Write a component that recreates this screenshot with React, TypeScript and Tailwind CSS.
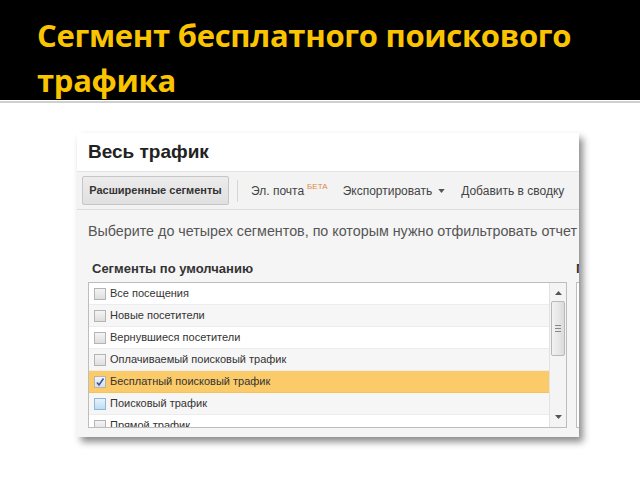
import React from "react";

const rows = [
  { label: "Все посещения", state: "off" },
  { label: "Новые посетители", state: "off" },
  { label: "Вернувшиеся посетители", state: "off" },
  { label: "Оплачиваемый поисковый трафик", state: "off" },
  { label: "Бесплатный поисковый трафик", state: "on" },
  { label: "Поисковый трафик", state: "hover" },
  { label: "Прямой трафик", state: "off" },
];

function Checkbox({ state }: { state: string }) {
  if (state === "hover") {
    return (
      <span className="block h-[12px] w-[12px] shrink-0 border border-[#8fb7d8] bg-gradient-to-b from-[#e6f3fc] to-[#bcdcf3]" />
    );
  }
  return (
    <span className="relative block h-[12px] w-[12px] shrink-0 border border-[#b4b4b4] bg-gradient-to-b from-[#f4f4f4] to-[#dedede]">
      {state === "on" && (
        <svg viewBox="0 0 12 12" className="absolute -left-[1px] -top-[1px] h-[12px] w-[12px]">
          <path d="M3 6.5 L5 9 L9.5 2.5" fill="none" stroke="#2b5aa8" strokeWidth="1.6" />
        </svg>
      )}
    </span>
  );
}

export default function App() {
  return (
    <div className="h-[480px] w-[640px] overflow-hidden bg-white">
      <div className="h-[100px] bg-black pl-[37px] pt-[13px]">
        <h1
          className="text-[31px] font-bold leading-[45px] text-[#fbc400]"
          style={{ fontFamily: "'Open Sans', sans-serif", letterSpacing: "-0.3px" }}
        >
          Сегмент бесплатного поискового
          <br />
          трафика
        </h1>
      </div>
      <div className="mt-[1px] h-[2px] bg-[#cfcfcf]" />

      <div
        className="ml-[77px] mt-[30px] flex h-[304px] w-[502px] flex-col overflow-hidden bg-[#f5f5f5] shadow-[4px_5px_7px_rgba(0,0,0,0.45)]"
        style={{ fontFamily: "'Liberation Sans', Arial, sans-serif" }}
      >
        <div className="flex h-[39px] items-center border-b border-[#e4e4e4] bg-white px-[11px]">
          <span className="text-[19px] font-bold text-[#222]">Весь трафик</span>
        </div>

        <div className="flex h-[38px] items-center border-b border-[#dcdcdc] bg-[#f3f3f3] px-[5px] text-[12px] text-[#444]">
          <div className="flex h-[29px] w-[147px] items-center justify-center rounded-[2px] border border-[#c6c6c6] bg-gradient-to-b from-[#ececec] to-[#e0e0e0] text-[11px] font-bold text-[#333]">
            Расширенные сегменты
          </div>
          <div className="ml-[8px] h-[22px] w-px bg-[#d6d6d6]" />
          <span className="ml-[13px]">Эл. почта</span>
          <span className="relative -top-[4px] ml-[3px] text-[8px] text-[#e08a3c]">БЕТА</span>
          <span className="ml-[15px]">Экспортировать</span>
          <svg viewBox="0 0 8 5" className="ml-[6px] h-[4px] w-[7px]">
            <path d="M0 0 H8 L4 5 Z" fill="#555" />
          </svg>
          <span className="ml-[16px]">Добавить в сводку</span>
        </div>

        <div className="flex-1 overflow-hidden pl-[11px]">
          <p className="mt-[13px] whitespace-nowrap text-[14.3px] leading-[16px] text-[#555]">
            Выберите до четырех сегментов, по которым нужно отфильтровать отчет
          </p>
          <div className="mt-[22px] flex">
            <div className="w-[480px] shrink-0">
              <p className="pl-[4px] text-[13px] font-bold leading-[16px] text-[#333]">
                Сегменты по умолчанию
              </p>
              <div className="mt-[5px] flex h-[146px] w-[479px] overflow-hidden border border-[#bdbdbd] bg-white">
                <div className="flex-1">
                  {rows.map((r, i) => (
                    <div
                      key={r.label}
                      className={
                        "flex h-[22px] items-center gap-[4px] border-b pl-[5px] text-[11px] text-[#333] " +
                        (r.state === "on"
                          ? "border-[#f6c25e] bg-[#fbca69]"
                          : i % 2 === 1
                          ? "border-[#ececec] bg-[#f6f6f6]"
                          : "border-[#ececec] bg-white")
                      }
                    >
                      <Checkbox state={r.state} />
                      <span>{r.label}</span>
                    </div>
                  ))}
                </div>
                <div className="flex w-[17px] shrink-0 flex-col items-center border-l border-[#e2e2e2] bg-[#f4f4f4]">
                  <svg viewBox="0 0 7 4" className="mt-[8px] h-[4px] w-[7px]">
                    <path d="M0 4 H7 L3.5 0 Z" fill="#555" />
                  </svg>
                  <div className="mt-[6px] flex h-[55px] w-[14px] items-center justify-center rounded-[2px] border border-[#b8b8b8] bg-gradient-to-r from-[#f2f2f2] to-[#dcdcdc]">
                    <div className="flex flex-col gap-[2px]">
                      <div className="h-px w-[6px] bg-[#888]" />
                      <div className="h-px w-[6px] bg-[#888]" />
                      <div className="h-px w-[6px] bg-[#888]" />
                    </div>
                  </div>
                  <div className="flex-1" />
                  <svg viewBox="0 0 7 4" className="mb-[8px] h-[4px] w-[7px]">
                    <path d="M0 0 H7 L3.5 4 Z" fill="#555" />
                  </svg>
                </div>
              </div>
            </div>
            <div className="ml-[8px] shrink-0">
              <p className="whitespace-nowrap text-[13px] font-bold leading-[16px] text-[#333]">
                Пользовательские сегменты
              </p>
              <div className="mt-[5px] h-[146px] w-[200px] border border-[#bdbdbd] bg-white" />
            </div>
          </div>
        </div>
      </div>
    </div>
  );
}
